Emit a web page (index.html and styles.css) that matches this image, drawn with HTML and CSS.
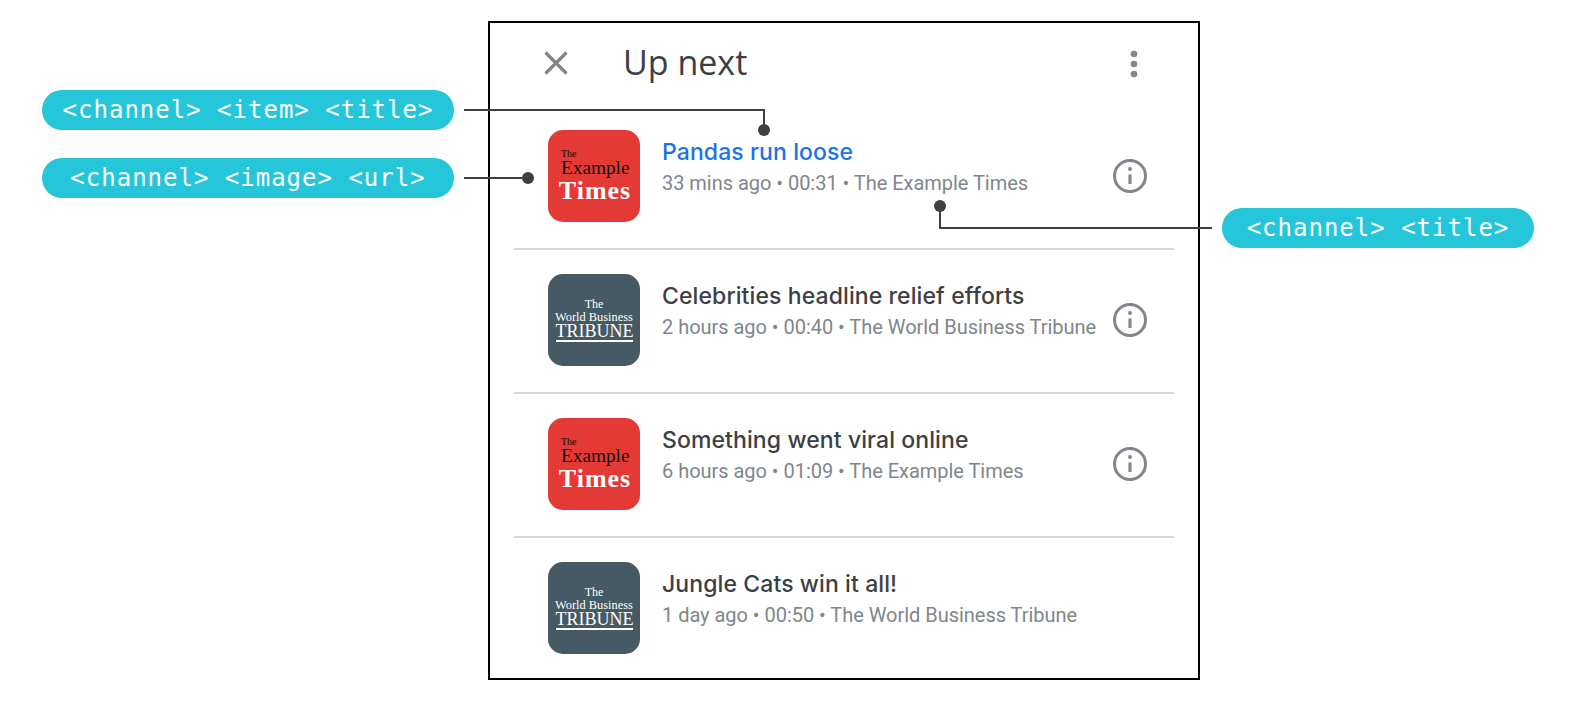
FILE: index.html
```html
<!DOCTYPE html>
<html lang="en">
<head>
<meta charset="utf-8">
<title>Up next</title>
<link rel="stylesheet" href="styles.css">
</head>
<body>
<main class="frame">
  <header class="head">
    <svg class="close" width="32" height="32" viewBox="0 0 32 32"><path d="M5.5 5.5 26.5 26.5M26.5 5.5 5.5 26.5"/></svg>
    <h1 class="head-title">Up next</h1>
    <svg class="more" width="12" height="32" viewBox="0 0 12 32"><circle cx="6" cy="6" r="3.3"/><circle cx="6" cy="16" r="3.3"/><circle cx="6" cy="26" r="3.3"/></svg>
  </header>
  <ul class="list">
    <li class="row">
      <div class="thumb thumb-red"><span class="r1">The</span><span class="r2">Example</span><span class="r3">Times</span></div>
      <div class="text"><div class="title title-active">Pandas run loose</div><div class="meta">33 mins ago • 00:31 • The Example Times</div></div>
      <svg class="info" width="36" height="36" viewBox="0 0 36 36"><circle class="ring" cx="18" cy="18" r="15.5"/><path class="stem" d="M18 16.5V26"/><circle class="dot" cx="18" cy="11" r="2"/></svg>
    </li>
    <li class="row">
      <div class="thumb thumb-slate"><span class="t1">The</span><span class="t2">World Business</span><span class="t3">TRIBUNE</span></div>
      <div class="text"><div class="title">Celebrities headline relief efforts</div><div class="meta">2 hours ago • 00:40 • The World Business Tribune</div></div>
      <svg class="info" width="36" height="36" viewBox="0 0 36 36"><circle class="ring" cx="18" cy="18" r="15.5"/><path class="stem" d="M18 16.5V26"/><circle class="dot" cx="18" cy="11" r="2"/></svg>
    </li>
    <li class="row">
      <div class="thumb thumb-red"><span class="r1">The</span><span class="r2">Example</span><span class="r3">Times</span></div>
      <div class="text"><div class="title">Something went viral online</div><div class="meta">6 hours ago • 01:09 • The Example Times</div></div>
      <svg class="info" width="36" height="36" viewBox="0 0 36 36"><circle class="ring" cx="18" cy="18" r="15.5"/><path class="stem" d="M18 16.5V26"/><circle class="dot" cx="18" cy="11" r="2"/></svg>
    </li>
    <li class="row">
      <div class="thumb thumb-slate"><span class="t1">The</span><span class="t2">World Business</span><span class="t3">TRIBUNE</span></div>
      <div class="text"><div class="title">Jungle Cats win it all!</div><div class="meta">1 day ago • 00:50 • The World Business Tribune</div></div>
    </li>
  </ul>
</main>
<svg class="leaders" width="1576" height="720" viewBox="0 0 1576 720">
  <path d="M464 110H764V130M464 178H528M940 206V228H1212"/>
  <circle cx="764" cy="130" r="6"/><circle cx="528" cy="178" r="6"/><circle cx="940" cy="206" r="6"/>
</svg>
<div class="pill pill-item">&lt;channel&gt; &lt;item&gt; &lt;title&gt;</div>
<div class="pill pill-image">&lt;channel&gt; &lt;image&gt; &lt;url&gt;</div>
<div class="pill pill-channel">&lt;channel&gt; &lt;title&gt;</div>
</body>
</html>
```
FILE: styles.css
```css
* { box-sizing: border-box; }
html, body { margin: 0; background: #fff; }
body { position: relative; width: 1576px; height: 720px; overflow: hidden; padding: 21px 0 0 488px; font-family: Roboto, "Liberation Sans", sans-serif; }

.frame { width: 712px; height: 659px; border: 2px solid #000; }

.head { height: 83px; display: flex; align-items: center; padding: 0 58px 3px 50px; }
.close { flex: none; }
.close path { stroke: #80868b; stroke-width: 3.2; fill: none; }
.head-title { flex: 1; margin: 0 0 2px 51px; font-size: 34px; font-weight: 400; color: #3c4043; font-family: "Open Sans", Roboto, sans-serif; line-height: 40px; }
.more { flex: none; fill: #80868b; margin-top: 2px; }

.list { list-style: none; margin: 0; padding: 0; }
.row { position: relative; height: 144px; margin: 0 24px; padding: 24px 0 0 34px; display: flex; align-items: flex-start; border-bottom: 2px solid #d8d8d8; }
.row:last-child { border-bottom: 0; }

.thumb { flex: none; width: 92px; height: 92px; border-radius: 15px; display: flex; flex-direction: column; align-items: center; font-family: "Liberation Serif", serif; }
.thumb span { display: block; }
.thumb-red { background: #e53935; padding-top: 19px; color: #111; }
.r1 { font-size: 10px; line-height: 10px; align-self: flex-start; margin-left: 13px; }
.r2 { font-size: 19.3px; line-height: 18px; align-self: flex-start; margin-left: 13px; }
.r3 { font-size: 26px; line-height: 28px; font-weight: 700; color: #fff; letter-spacing: 1px; margin-left: 2px; }
.thumb-slate { background: #455a64; padding-top: 24px; color: #fff; }
.t1 { font-size: 12px; line-height: 13px; }
.t2 { font-size: 12.4px; line-height: 13px; white-space: nowrap; }
.t3 { font-size: 18px; line-height: 13px; margin-top: 1px; padding-bottom: 2px; border-bottom: 2px solid #fff; width: 77px; text-align: center; white-space: nowrap; }

.text { margin-left: 22px; padding-top: 5px; }
.title { font-size: 23px; line-height: 34px; font-weight: 500; letter-spacing: 0.1px; color: #3c4043; font-family: Inter, Roboto, sans-serif; white-space: nowrap; }
.title-active { color: #1a73e8; }
.meta { font-size: 20px; line-height: 28px; letter-spacing: -0.03px; color: #80868b; white-space: nowrap; }

.info { position: absolute; left: 598px; top: 52px; }
.ring { fill: none; stroke: #80868b; stroke-width: 3; }
.stem { stroke: #80868b; stroke-width: 3.2; fill: none; }
.dot { fill: #80868b; }

.leaders { position: absolute; left: 0; top: 0; pointer-events: none; }
.leaders path { fill: none; stroke: #3c4043; stroke-width: 2; }
.leaders circle { fill: #3c4043; }

.pill { position: absolute; height: 40px; border-radius: 20px; background: #26c6da; color: #fff; display: flex; align-items: center; justify-content: center; font-family: "DejaVu Sans Mono", "Liberation Mono", monospace; font-size: 24px; letter-spacing: 1px; white-space: nowrap; }
.pill-item { left: 42px; top: 90px; width: 412px; }
.pill-image { left: 42px; top: 158px; width: 412px; }
.pill-channel { left: 1222px; top: 208px; width: 312px; }
```
